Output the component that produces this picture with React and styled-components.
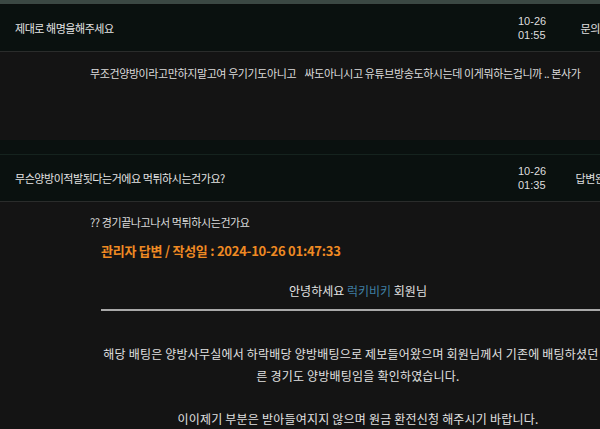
import React from 'react';
import styled, { createGlobalStyle } from 'styled-components';

const GlobalStyle = createGlobalStyle`
  html, body {
    margin: 0;
    padding: 0;
    background-color: #121212;
    overflow: hidden;
  }
  body {
    font-family: "Noto Sans CJK KR", "Noto Sans", sans-serif;
    color: #dcdcdc;
  }
`;

const Page = styled.div`
  width: 640px;
`;

const TopStrip = styled.div`
  height: 4px;
  background-color: #3b4843;
  border-bottom: 1px solid #0c0f0e;
`;

const Row = styled.div`
  display: flex;
  align-items: center;
  height: 46px;
  padding-right: 20px;
  background-color: #0a110f;
  border-bottom: 1px solid #2a2c2b;
`;

const Title = styled.div`
  flex: 1;
  padding-left: 15px;
  font-size: 11px;
  letter-spacing: -0.45px;
  color: #e4e4e4;
`;

const DateCell = styled.div`
  width: 52px;
  font-family: "Liberation Sans", Arial, sans-serif;
  font-size: 11px;
  line-height: 14px;
  color: #dedede;
`;

const Status = styled.div`
  width: 50px;
  text-align: center;
  white-space: nowrap;
  font-size: 11px;
  letter-spacing: -0.4px;
  color: #e0e0e0;
`;

const Gap = styled.div`
  height: 14px;
  background-color: #0a110f;
  border-bottom: 1px solid #15231e;
`;

const Content = styled.div`
  background-color: #141414;
  padding: ${p => p.$pad || '0'};
  height: ${p => p.$height || 'auto'};
  box-sizing: border-box;
`;

const Question = styled.p`
  margin: 0;
  padding-left: 90px;
  font-size: 11px;
  line-height: 20px;
  letter-spacing: -0.4px;
  color: #dcdcdc;
  white-space: pre;
`;

const AnswerBox = styled.div`
  margin-left: 90px;
  width: 536px;
  padding: 0 11px;
  box-sizing: border-box;
  margin-top: 9px;
`;

const AnswerHead = styled.div`
  font-size: 13px;
  font-weight: bold;
  letter-spacing: -0.25px;
  line-height: 20px;
  color: #ef8a23;
`;

const Greeting = styled.div`
  margin-top: 20px;
  text-align: center;
  font-size: 12px;
  line-height: 20px;
  color: #e2e2e2;
`;

const Nick = styled.span`
  color: #3f7ea2;
`;

const Divider = styled.hr`
  border: none;
  height: 2px;
  background-color: #a9a9a9;
  margin: 8px 0 0;
`;

const Body = styled.p`
  margin: ${p => (p.$first ? '32px 0 0' : '0')};
  text-align: center;
  font-size: 12px;
  line-height: 22px;
  letter-spacing: 0.2px;
  color: #e0e0e0;
`;

const Blank = styled.div`
  height: 21px;
`;

const PostRow = ({ title, date, time, status }) => (
  <Row>
    <Title>{title}</Title>
    <DateCell>
      {date}
      <br />
      {time}
    </DateCell>
    <Status>{status}</Status>
  </Row>
);

export default function App() {
  return (
    <Page>
      <GlobalStyle />
      <TopStrip />
      <PostRow title="제대로 해명을해주세요" date="10-26" time="01:55" status="문의중" />
      <Content $pad="11px 0 0" $height="88px">
        <Question>{'무조건양방이라고만하지말고여 우기기도아니고    싸도아니시고 유튜브방송도하시는데 이게뭐하는겁니까 .. 본사가'}</Question>
      </Content>
      <Gap />
      <PostRow title="무슨양방이적발됫다는거에요 먹튀하시는건가요?" date="10-26" time="01:35" status="답변완료" />
      <Content $pad="10px 0 0" $height="240px">
        <Question>?? 경기끝나고나서 먹튀하시는건가요</Question>
        <AnswerBox>
          <AnswerHead>관리자 답변 / 작성일 : 2024-10-26 01:47:33</AnswerHead>
          <Greeting>
            안녕하세요 <Nick>럭키비키</Nick> 회원님
          </Greeting>
          <Divider />
          <Body $first>
            해당 배팅은 양방사무실에서 하락배당 양방배팅으로 제보들어왔으며 회원님께서 기존에 배팅하셨던 다른 경기도 양방배팅임을 확인하였습니다.
          </Body>
          <Blank />
          <Body>이이제기 부분은 받아들여지지 않으며 원금 환전신청 해주시기 바랍니다.</Body>
        </AnswerBox>
      </Content>
    </Page>
  );
}
